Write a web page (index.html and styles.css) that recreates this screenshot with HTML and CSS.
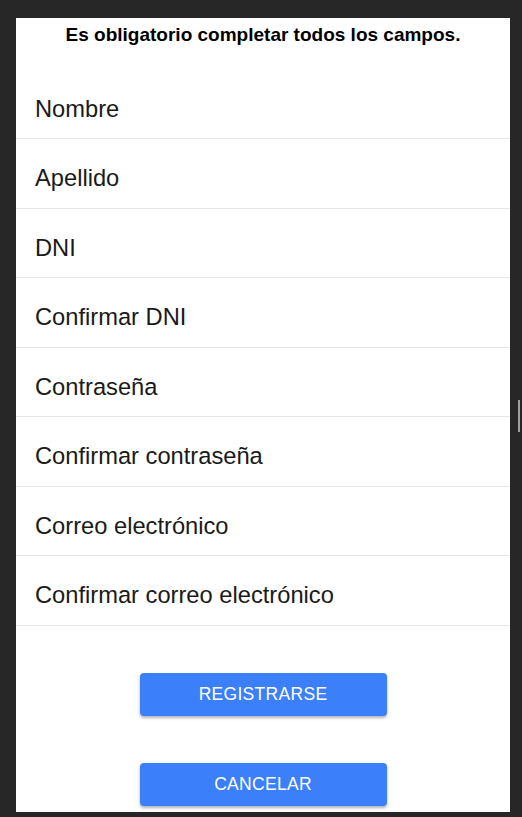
FILE: index.html
```html
<!DOCTYPE html>
<html lang="es">
<head>
<meta charset="utf-8">
<link rel="stylesheet" href="styles.css">
</head>
<body>
<div class="panel">
  <h1 class="title">Es obligatorio completar todos los campos.</h1>
  <div class="fields">
    <div class="field">Nombre</div>
    <div class="field">Apellido</div>
    <div class="field">DNI</div>
    <div class="field">Confirmar DNI</div>
    <div class="field">Contraseña</div>
    <div class="field">Confirmar contraseña</div>
    <div class="field">Correo electrónico</div>
    <div class="field">Confirmar correo electrónico</div>
  </div>
  <div class="actions">
    <button class="btn">REGISTRARSE</button>
    <button class="btn">CANCELAR</button>
  </div>
</div>
<div class="scroll-thumb"></div>
</body>
</html>
```
FILE: styles.css
```css
html, body {
  margin: 0;
  padding: 0;
  background: #272727;
  height: 817px;
  overflow: hidden;
}
body {
  padding: 18px 12px 5px 16px;
  box-sizing: border-box;
  font-family: "Liberation Sans", Arial, sans-serif;
}
.panel {
  background: #ffffff;
  width: 494px;
  height: 794px;
  display: flex;
  flex-direction: column;
}
.title {
  margin: 0;
  height: 51.5px;
  font-size: 19px;
  font-weight: bold;
  text-align: center;
  color: #000;
  padding-top: 6px;
  box-sizing: border-box;
  line-height: 22px;
}
.fields {
  display: flex;
  flex-direction: column;
}
.field {
  height: 69.5px;
  box-sizing: border-box;
  border-bottom: 1px solid #e6e6e6;
  padding: 25px 0 0 19px;
  font-size: 23.7px;
  line-height: 28px;
  color: #1a1a1a;
}
.actions {
  display: flex;
  flex-direction: column;
  align-items: center;
  gap: 47px;
  padding-top: 47px;
}
.btn {
  width: 247px;
  height: 43px;
  border: none;
  border-radius: 4px;
  background: #3b7ffa;
  color: #ffffff;
  font-family: "Liberation Sans", Arial, sans-serif;
  font-size: 17.5px;
  letter-spacing: 0.3px;
  box-shadow: 0 2px 3px rgba(0,0,0,0.3);
  padding: 0;
}
.scroll-thumb {
  position: absolute;
  left: 518px;
  top: 400px;
  width: 2px;
  height: 32px;
  background: #a0a0a0;
}
```
